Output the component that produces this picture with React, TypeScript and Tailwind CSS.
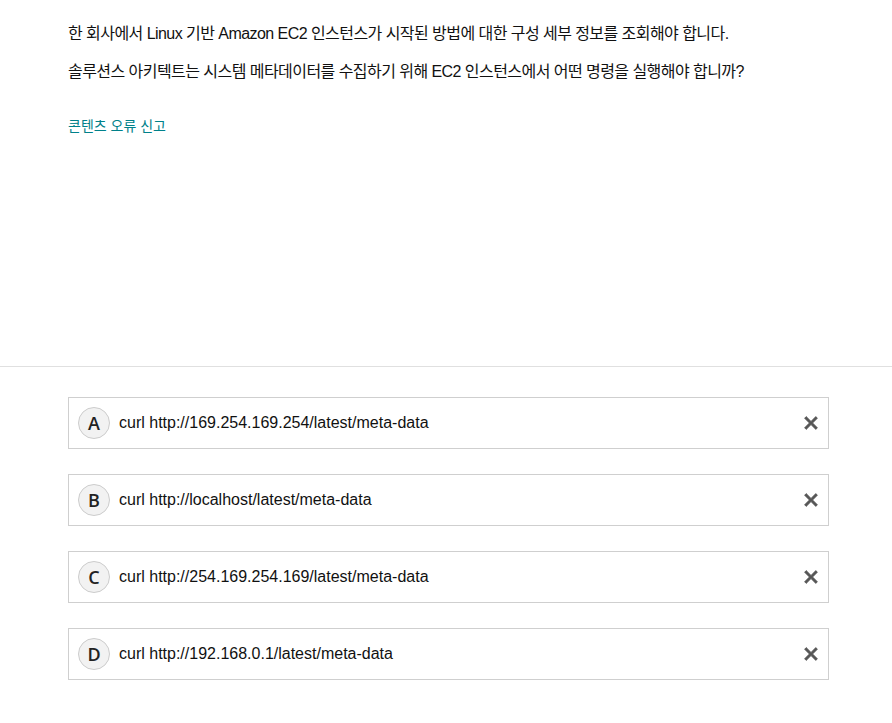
import React from "react";

const options = [
  { letter: "A", text: "curl http://169.254.169.254/latest/meta-data" },
  { letter: "B", text: "curl http://localhost/latest/meta-data" },
  { letter: "C", text: "curl http://254.169.254.169/latest/meta-data" },
  { letter: "D", text: "curl http://192.168.0.1/latest/meta-data" },
];

function XIcon() {
  return (
    <svg width="14" height="14" viewBox="0 0 14 14" aria-hidden="true">
      <path
        d="M2.2 0.6 L7 5.4 L11.8 0.6 L13.4 2.2 L8.6 7 L13.4 11.8 L11.8 13.4 L7 8.6 L2.2 13.4 L0.6 11.8 L5.4 7 L0.6 2.2 Z"
        fill="#555555"
        stroke="#555555"
        strokeWidth="0.8"
        strokeLinejoin="round"
      />
    </svg>
  );
}

export default function App() {
  return (
    <div
      className="min-h-[723px] w-[892px] bg-white text-[#111]"
      style={{ fontFamily: '"Liberation Sans", Arial, "Noto Sans CJK KR", sans-serif' }}
    >
      <div className="px-[68px] pt-[23px] h-[366px]">
        <p className="text-[16px] leading-[22px] m-0 tracking-[-0.55px]">
          한 회사에서 Linux 기반 Amazon EC2 인스턴스가 시작된 방법에 대한 구성 세부 정보를 조회해야 합니다.
        </p>
        <p className="text-[16px] leading-[22px] mt-[16px] tracking-[-0.55px]">
          솔루션스 아키텍트는 시스템 메타데이터를 수집하기 위해 EC2 인스턴스에서 어떤 명령을 실행해야 합니까?
        </p>
        <p className="mt-[33px] text-[14px] leading-[20px] text-[#00818a]">콘텐츠 오류 신고</p>
      </div>
      <div className="border-t border-[#e0e0e0]" />
      <div className="pl-[68px] pr-[63px] pt-[30px] flex flex-col gap-[25px]">
        {options.map((o) => (
          <div
            key={o.letter}
            className="h-[52px] border border-[#cfcfcf] bg-white flex items-center pl-[9px] pr-[10px]"
          >
            <div
              className="w-[32px] h-[32px] rounded-full border border-[#cccccc] bg-[#f2f2f2] flex items-center justify-center text-[18px] font-semibold text-[#222]"
              style={{ fontFamily: '"Open Sans", "Liberation Sans", sans-serif' }}
            >
              {o.letter}
            </div>
            <div className="ml-[9px] text-[16px] flex-1">{o.text}</div>
            <XIcon />
          </div>
        ))}
      </div>
    </div>
  );
}
